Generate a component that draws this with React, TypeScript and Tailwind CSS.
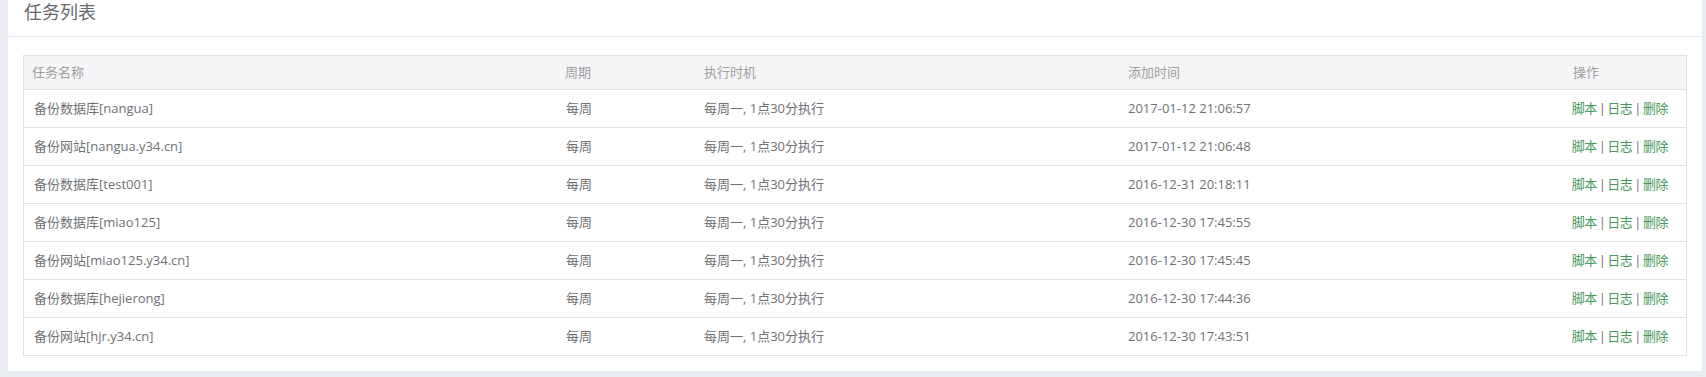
import React from "react";

type Row = { name: string; cycle: string; when: string; added: string };

const rows: Row[] = [
  { name: "备份数据库[nangua]", cycle: "每周", when: "每周一, 1点30分执行", added: "2017-01-12 21:06:57" },
  { name: "备份网站[nangua.y34.cn]", cycle: "每周", when: "每周一, 1点30分执行", added: "2017-01-12 21:06:48" },
  { name: "备份数据库[test001]", cycle: "每周", when: "每周一, 1点30分执行", added: "2016-12-31 20:18:11" },
  { name: "备份数据库[miao125]", cycle: "每周", when: "每周一, 1点30分执行", added: "2016-12-30 17:45:55" },
  { name: "备份网站[miao125.y34.cn]", cycle: "每周", when: "每周一, 1点30分执行", added: "2016-12-30 17:45:45" },
  { name: "备份数据库[hejierong]", cycle: "每周", when: "每周一, 1点30分执行", added: "2016-12-30 17:44:36" },
  { name: "备份网站[hjr.y34.cn]", cycle: "每周", when: "每周一, 1点30分执行", added: "2016-12-30 17:43:51" },
];

const cols = "grid grid-cols-[532px_139px_424px_444px_1fr]";

export default function App() {
  return (
    <div
      className="min-h-[377px] w-[1706px] bg-[#e8ebef] pl-[8px] pr-[4px] pb-[7px] text-[13px] text-[#6f7173]"
      style={{ fontFamily: '"Open Sans", "Noto Sans CJK SC", sans-serif' }}
    >
      <div className="bg-white">
        <div className="h-[37px] border-b border-[#e7eaec] pl-[16px]">
          <h2 className="text-[18px] leading-[25px] font-normal text-[#676a6c]">任务列表</h2>
        </div>
        <div className="px-[15px] pt-[18px] pb-[15px]">
          <div className="border border-[#e0e2e4]">
            <div className={`${cols} h-[33px] items-center bg-[#f5f5f7] text-[#a0a0a0]`}>
              <div className="pl-[8px]">任务名称</div>
              <div className="pl-[9px]">周期</div>
              <div className="pl-[9px]">执行时机</div>
              <div className="pl-[9px]">添加时间</div>
              <div className="pl-[10px]">操作</div>
            </div>
            {rows.map((r, i) => (
              <div
                key={i}
                className={`${cols} h-[38px] items-center border-t border-[#e0e2e4]`}
              >
                <div className="pl-[10px]">{r.name}</div>
                <div className="pl-[10px]">{r.cycle}</div>
                <div className="pl-[9px]">{r.when}</div>
                <div className="pl-[9px]">{r.added}</div>
                <div className="pr-[18px] flex justify-end whitespace-nowrap tracking-[-0.5px]">
                  <a className="text-[#47985a] cursor-pointer">脚本</a>
                  <span className="mx-[2px]">|</span>
                  <a className="text-[#47985a] cursor-pointer">日志</a>
                  <span className="mx-[2px]">|</span>
                  <a className="text-[#47985a] cursor-pointer">删除</a>
                </div>
              </div>
            ))}
          </div>
        </div>
      </div>
    </div>
  );
}
